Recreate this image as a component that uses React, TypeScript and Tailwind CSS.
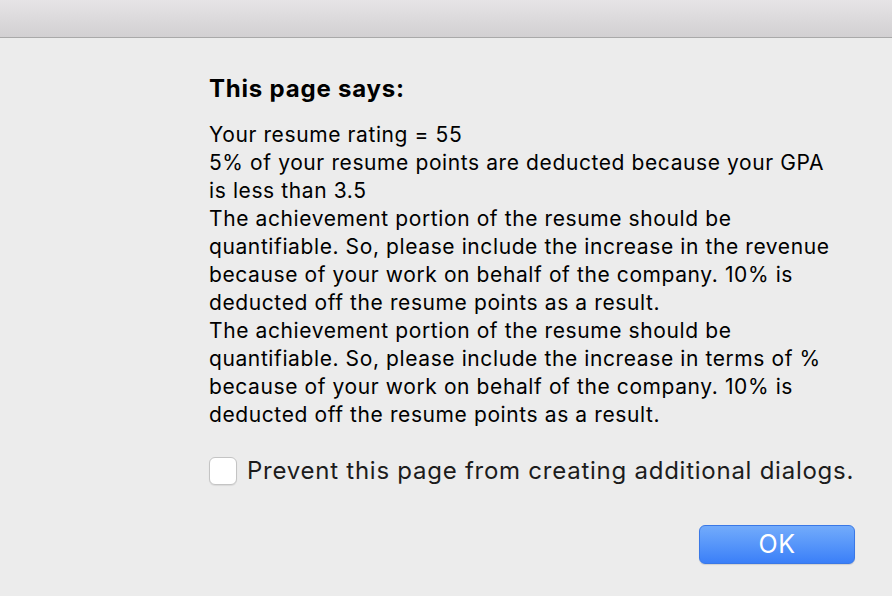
import React from 'react';

const lines = [
  'Your resume rating = 55',
  '5% of your resume points are deducted because your GPA',
  'is less than 3.5',
  'The achievement portion of the resume should be',
  'quantifiable. So, please include the increase in the revenue',
  'because of your work on behalf of the company. 10% is',
  'deducted off the resume points as a result.',
  'The achievement portion of the resume should be',
  'quantifiable. So, please include the increase in terms of %',
  'because of your work on behalf of the company. 10% is',
  'deducted off the resume points as a result.',
];

export default function App() {
  return (
    <div
      className="w-[892px] h-[596px] overflow-hidden bg-[#ececec] flex flex-col"
      style={{ fontFamily: 'Inter, "Noto Sans", sans-serif' }}
    >
      <div className="h-[38px] shrink-0 bg-gradient-to-b from-[#e6e4e6] to-[#d2d0d2] border-b border-[#a9a9a9]" />

      <div className="pl-[209px] pt-[37px] flex flex-col text-black">
        <h1 className="text-[24px] leading-[28px] font-bold tracking-[0.8px]">This page says:</h1>

        <div className="mt-[18px] text-[21px] leading-[28px] tracking-[0.6px]">
          {lines.map((l, i) => (
            <div key={i} className="whitespace-nowrap">{l}</div>
          ))}
        </div>

        <label className="mt-[28px] flex items-center gap-[10px]">
          <span className="w-[28px] h-[28px] rounded-[6px] bg-white border border-[#c4c4c4] shadow-[0_1px_1px_rgba(0,0,0,0.08)]" />
          <span className="text-[24px] leading-[28px] tracking-[0.75px] text-[#1c1c1c] whitespace-nowrap">
            Prevent this page from creating additional dialogs.
          </span>
        </label>

        <div className="mt-[40px] pr-[37px] flex justify-end">
          <button className="w-[156px] h-[39px] rounded-[6px] bg-gradient-to-b from-[#72abfb] to-[#3b7ff8] border border-[#3a78e6] text-white text-[25px] leading-none tracking-[0.5px] shadow-[0_1px_1px_rgba(0,0,0,0.12)]">
            OK
          </button>
        </div>
      </div>
    </div>
  );
}
